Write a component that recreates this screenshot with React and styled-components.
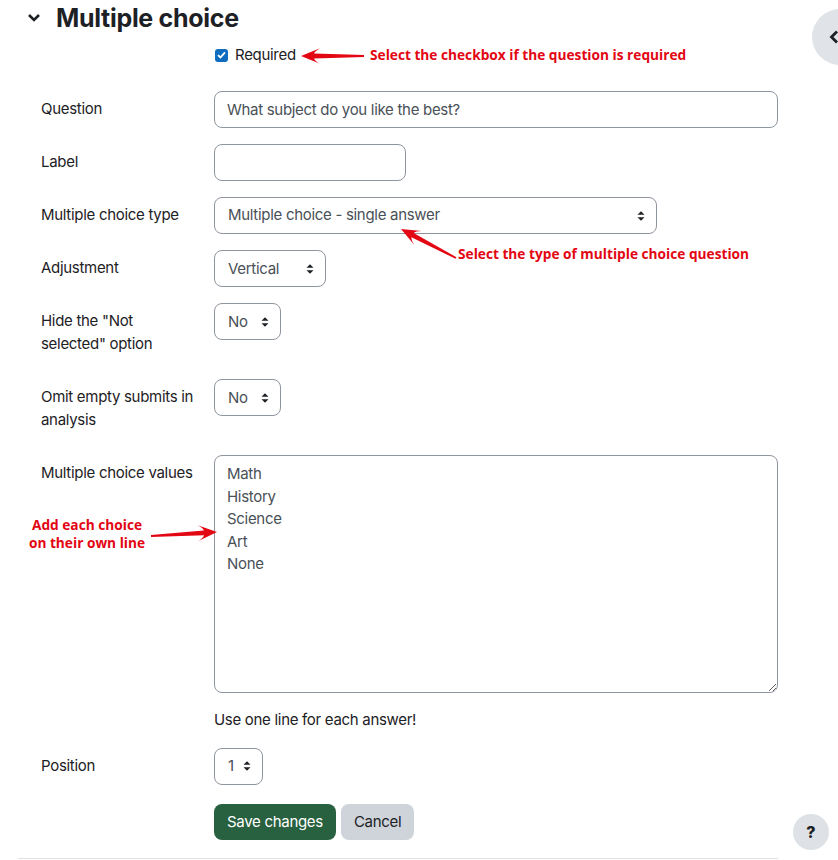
import styled, { createGlobalStyle } from "styled-components";

const GlobalStyle = createGlobalStyle`
  body {
    margin: 0;
    background: #fff;
    font-family: Inter, "Noto Sans", sans-serif;
    color: #1d2125;
  }
  * { box-sizing: border-box; }
`;

function Caret() {
  return (
    <svg width="8" height="12" viewBox="0 0 8 12">
      <polygon points="0.5,4.8 4,1.2 7.5,4.8" fill="#1d2125" />
      <polygon points="0.5,7.2 4,10.8 7.5,7.2" fill="#1d2125" />
    </svg>
  );
}

// red callout arrow, drawn pointing right then rotated from tail to tip
function Arrow({ from, to }) {
  const dx = to[0] - from[0];
  const dy = to[1] - from[1];
  const L = Math.hypot(dx, dy);
  const angle = (Math.atan2(dy, dx) * 180) / Math.PI;
  const d = `M0,7.1 L${L - 13},5.6 Q${L - 14},3 ${L - 19},0.2 L${L},8 L${L - 19},15.8 Q${L - 14},13 ${L - 13},10.4 L0,8.9 Z`;
  return (
    <ArrowSvg
      width={L}
      height="16"
      style={{ left: from[0], top: from[1] - 8, transform: `rotate(${angle}deg)` }}
    >
      <path d={d} fill="#e30613" />
    </ArrowSvg>
  );
}

function Select({ value, width }) {
  return (
    <SelectBox $width={width}>
      <span>{value}</span>
      <Caret />
    </SelectBox>
  );
}

export default function App() {
  return (
    <Root>
      <GlobalStyle />
      <Page>
        <Header>
          <svg width="14" height="10" viewBox="0 0 14 10">
            <polyline points="2,2 7,7 12,2" fill="none" stroke="#1d2125" strokeWidth="2.6" />
          </svg>
          <Title>Multiple choice</Title>
        </Header>

        <RequiredRow>
          <Check>
            <svg width="9" height="8" viewBox="0 0 9 8">
              <polyline points="1,4.2 3.4,6.5 8,1.3" fill="none" stroke="#fff" strokeWidth="1.8" />
            </svg>
          </Check>
          <span>Required</span>
        </RequiredRow>

        <Row>
          <Label>Question</Label>
          <Field>
            <Input value="What subject do you like the best?" readOnly />
          </Field>
        </Row>
        <Row>
          <Label>Label</Label>
          <Field>
            <Input $width={192} readOnly />
          </Field>
        </Row>
        <Row>
          <Label>Multiple choice type</Label>
          <Field>
            <Select value="Multiple choice - single answer" width={443} />
          </Field>
        </Row>
        <Row>
          <Label>Adjustment</Label>
          <Field>
            <Select value="Vertical" width={112} />
          </Field>
        </Row>
        <Row>
          <Label $tall>Hide the "Not selected" option</Label>
          <Field>
            <Select value="No" width={67} />
          </Field>
        </Row>
        <Row>
          <Label $tall>Omit empty submits in analysis</Label>
          <Field>
            <Select value="No" width={67} />
          </Field>
        </Row>
        <Row>
          <Label>Multiple choice values</Label>
          <Field>
            <TextArea defaultValue={"Math\nHistory\nScience\nArt\nNone"} />
            <Help>Use one line for each answer!</Help>
          </Field>
        </Row>
        <Row>
          <Label>Position</Label>
          <Field>
            <Select value="1" width={49} />
          </Field>
        </Row>
        <Buttons>
          <Button $primary>Save changes</Button>
          <Button>Cancel</Button>
        </Buttons>
      </Page>

      <Note $x={370} $y={46}>Select the checkbox if the question is required</Note>
      <Arrow from={[364, 56]} to={[301, 56]} />
      <Note $x={458} $y={245}>Select the type of multiple choice question</Note>
      <Arrow from={[456, 258]} to={[401, 229]} />
      <Note $x={18} $y={516} $center>
        Add each choice
        <br />
        on their own line
      </Note>
      <Arrow from={[151, 536]} to={[217, 532]} />

      <DrawerToggle>
        <svg width="10" height="14" viewBox="0 0 10 14">
          <polyline points="8,1.5 2.5,7 8,12.5" fill="none" stroke="#1d2125" strokeWidth="2.8" />
        </svg>
      </DrawerToggle>
      <HelpButton>?</HelpButton>
    </Root>
  );
}

const Root = styled.div`
  position: relative;
  width: 838px;
  height: 860px;
  overflow: hidden;
`;

const Page = styled.div`
  margin-left: 18px;
  width: 760px;
  padding-bottom: 18px;
  border-bottom: 1px solid #dee2e6;
  font-size: 15px;
  line-height: 22.5px;
  letter-spacing: -0.3px;
`;

const Header = styled.div`
  display: flex;
  align-items: center;
  height: 36px;
  padding-left: 9px;
  gap: 15px;
`;

const Title = styled.h3`
  margin: 0;
  font-size: 25px;
  font-weight: 700;
  letter-spacing: -0.3px;
  line-height: 1.2;
`;

const RequiredRow = styled.div`
  display: flex;
  align-items: center;
  gap: 7px;
  height: 38px;
  margin-bottom: 17px;
  padding-left: 197px;
`;

const Check = styled.span`
  display: inline-flex;
  align-items: center;
  justify-content: center;
  width: 13px;
  height: 13px;
  border-radius: 3px;
  background: #0f6cbf;
`;

const Row = styled.div`
  display: flex;
  padding-left: 23px;
  margin-bottom: 16px;
`;

const Label = styled.label`
  flex: 0 0 173px;
  padding: 7px 14px ${(p) => (p.$tall ? "8px" : "7px")} 0;
`;

const Field = styled.div`
  flex: 1;
`;

const Input = styled.input`
  display: block;
  width: ${(p) => (p.$width ? `${p.$width}px` : "100%")};
  height: 37.1px;
  padding: 6px 12px;
  border: 1px solid #8f959e;
  border-radius: 8px;
  font: inherit;
  letter-spacing: inherit;
  color: #495057;
  outline: none;
`;

const SelectBox = styled.div`
  display: flex;
  align-items: center;
  justify-content: space-between;
  width: ${(p) => p.$width}px;
  height: 37.1px;
  padding: 0 11px 0 13px;
  border: 1px solid #8f959e;
  border-radius: 8px;
  color: #495057;
  white-space: nowrap;
`;

const TextArea = styled.textarea`
  display: block;
  width: 100%;
  height: 238px;
  padding: 7px 12px 6px;
  border: 1px solid #8f959e;
  border-radius: 8px;
  font: inherit;
  letter-spacing: inherit;
  line-height: 22.5px;
  color: #495057;
  outline: none;
`;

const Help = styled.div`
  margin-top: 16px;
`;

const Buttons = styled.div`
  display: flex;
  gap: 5px;
  padding-left: 196px;
  margin-top: 19px;
`;

const Button = styled.button`
  height: 36.5px;
  padding: 6px 13px;
  border: none;
  border-radius: 8px;
  font: inherit;
  letter-spacing: inherit;
  background: ${(p) => (p.$primary ? "#27613f" : "#ced4da")};
  color: ${(p) => (p.$primary ? "#fff" : "#1d2125")};
`;

const Note = styled.div`
  position: absolute;
  left: ${(p) => p.$x}px;
  top: ${(p) => p.$y}px;
  width: ${(p) => (p.$center ? "138px" : "auto")};
  text-align: ${(p) => (p.$center ? "center" : "left")};
  font-family: "Open Sans", "Noto Sans", sans-serif;
  font-weight: 700;
  font-size: 13.7px;
  line-height: 18px;
  color: #e30613;
  white-space: nowrap;
`;

const ArrowSvg = styled.svg`
  position: absolute;
  transform-origin: 0 50%;
  overflow: visible;
`;

const DrawerToggle = styled.div`
  position: absolute;
  left: 812px;
  top: 9px;
  width: 56px;
  height: 56px;
  border-radius: 50%;
  background: #e0e4e8;
  display: flex;
  align-items: center;
  padding-left: 17px;
`;

const HelpButton = styled.div`
  position: absolute;
  left: 793px;
  top: 814px;
  width: 36px;
  height: 36px;
  border-radius: 50%;
  background: #dee2e6;
  display: flex;
  align-items: center;
  justify-content: center;
  font-family: Inter, sans-serif;
  font-weight: 800;
  font-size: 16px;
  color: #1d2125;
`;
